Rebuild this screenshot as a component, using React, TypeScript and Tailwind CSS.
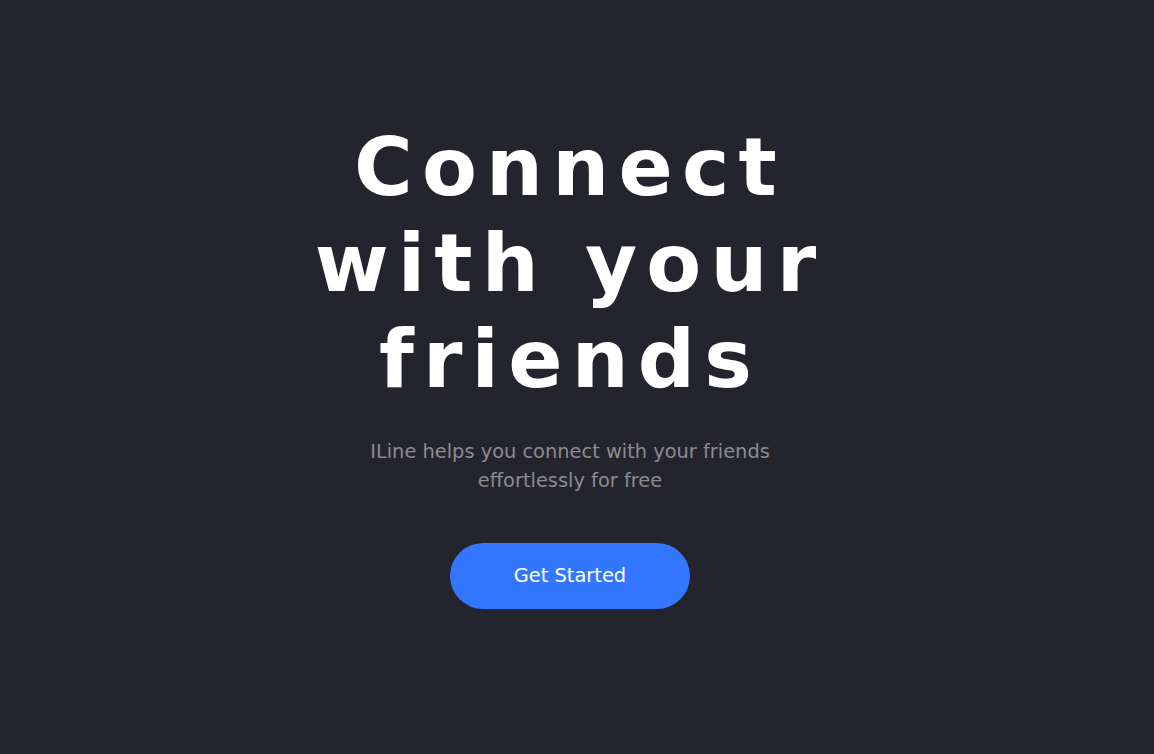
import React from "react";

const App: React.FC = () => {
  return (
    <div className="min-h-screen w-full bg-[#24242f] font-['DejaVu_Sans',sans-serif]">
      <div className="flex flex-col items-center pt-[120px] pr-[14px] text-center">
        <h1 className="text-[80px] leading-[1.2] font-bold tracking-[0.115em] text-white max-w-[560px]">
          Connect with your friends
        </h1>
        <p className="mt-[29px] max-w-[430px] text-[19.4px] leading-[29px] text-[#8b8b90]">
          ILine helps you connect with your friends effortlessly for free
        </p>
        <button className="mt-12 h-[66px] w-[240px] rounded-full bg-[#3377ff] text-[19.4px] text-white">
          Get Started
        </button>
      </div>
    </div>
  );
};

export default App;
